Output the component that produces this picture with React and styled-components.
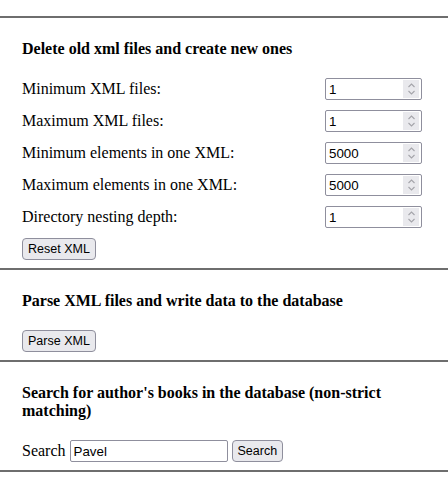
import styled, { createGlobalStyle } from "styled-components"

const fields = [
	{ label: "Minimum XML files:", value: 1 },
	{ label: "Maximum XML files:", value: 1 },
	{ label: "Minimum elements in one XML:", value: 5000 },
	{ label: "Maximum elements in one XML:", value: 5000 },
	{ label: "Directory nesting depth:", value: 1 },
]

const Spinner = () => (
	<SpinBox>
		<svg width="9" height="14" viewBox="0 0 9 14" fill="none" stroke="#a4a4aa" strokeWidth="1.1">
			<path d="M1.5 5 L4.5 2 L7.5 5" />
			<path d="M1.5 9 L4.5 12 L7.5 9" />
		</svg>
	</SpinBox>
)

const App = () => {
	return (
		<>
			<GlobalStyle />
			<Page>
				<Section>
					<Title>Delete old xml files and create new ones</Title>
					<FieldList>
						{fields.map((field, index) => (
							<FieldRow key={index}>
								<Label>{field.label}</Label>
								<NumberField>
									<NumberInput type="number" defaultValue={field.value} />
									<Spinner />
								</NumberField>
							</FieldRow>
						))}
					</FieldList>
					<Button>Reset XML</Button>
				</Section>
				<Section>
					<Title>Parse XML files and write data to the database</Title>
					<Button>Parse XML</Button>
				</Section>
				<Section>
					<Title>Search for author's books in the database (non-strict matching)</Title>
					<SearchRow>
						<Label>Search</Label>
						<TextInput type="text" defaultValue="Pavel" />
						<Button>Search</Button>
					</SearchRow>
				</Section>
			</Page>
		</>
	)
}

const GlobalStyle = createGlobalStyle`
	body {
		margin: 0;
		background: #ffffff;
		font-family: "Liberation Serif", "Times New Roman", serif;
		color: #000000;
	}
`

const Page = styled.main`
	padding-top: 16px;
	border-bottom: 2px solid #6e6e6e;
`

const Section = styled.section`
	border-top: 2px solid #6e6e6e;
	padding: 22px 22px 8px;
`

const Title = styled.h3`
	margin: 0 0 20px;
	max-width: 370px;
	font-size: 16px;
	font-weight: 700;
	line-height: normal;
`

const FieldList = styled.div`
	display: flex;
	flex-direction: column;
	gap: 10px;
	margin-bottom: 10px;
`

const FieldRow = styled.div`
	display: flex;
	align-items: center;
	justify-content: space-between;
	padding-right: 4px;
`

const Label = styled.label`
	font-size: 16px;
`

const NumberField = styled.div`
	box-sizing: border-box;
	display: flex;
	align-items: center;
	width: 97px;
	height: 22px;
	padding: 1px 2px 1px 0;
	border: 1px solid #8f8f9d;
	border-radius: 2px;
	background: #ffffff;
`

const NumberInput = styled.input`
	flex: 1;
	min-width: 0;
	height: 100%;
	border: none;
	outline: none;
	padding: 0 3px;
	font-family: "Liberation Sans", Arial, sans-serif;
	font-size: 13.33px;
	color: #000000;
	background: transparent;
	-moz-appearance: textfield;

	&::-webkit-inner-spin-button,
	&::-webkit-outer-spin-button {
		-webkit-appearance: none;
		margin: 0;
	}
`

const SpinBox = styled.span`
	display: flex;
	align-items: center;
	justify-content: center;
	width: 16px;
	height: 18px;
	background: #e9e9ed;
`

const TextInput = styled.input`
	box-sizing: border-box;
	width: 158px;
	height: 22px;
	margin: 0 4px;
	padding: 1px 3px;
	border: 1px solid #8f8f9d;
	border-radius: 2px;
	font-family: "Liberation Sans", Arial, sans-serif;
	font-size: 13.33px;
	color: #000000;
	background: #ffffff;
`

const Button = styled.button`
	box-sizing: border-box;
	height: 22px;
	padding: 1px 5px;
	border: 1px solid #8f8f9d;
	border-radius: 4px;
	background: #e9e9ed;
	font-family: "Liberation Sans", Arial, sans-serif;
	font-size: 12.5px;
	color: #000000;
`

const SearchRow = styled.div`
	display: flex;
	align-items: center;
`

export default App
